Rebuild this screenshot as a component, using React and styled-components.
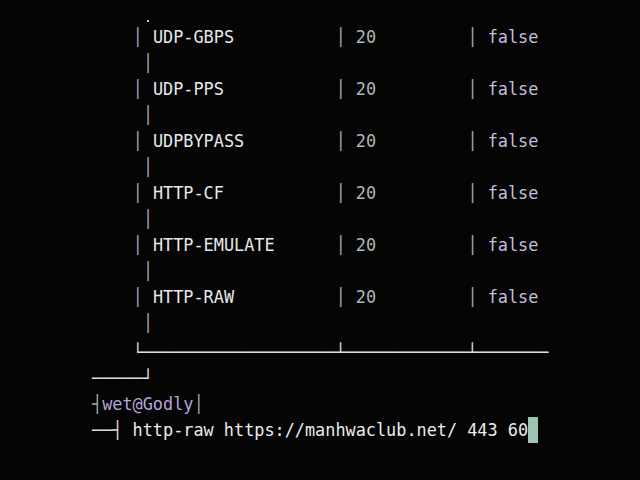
import React from "react";
import styled, { createGlobalStyle } from "styled-components";

const Global = createGlobalStyle`
  html, body { margin: 0; padding: 0; background: #050505; }
  #root { width: 640px; height: 480px; }
`;

const Screen = styled.div`
  width: 640px;
  height: 480px;
  overflow: hidden;
  background: #050505;
  padding: 0 0 0 92px;
  box-sizing: border-box;
`;

const Terminal = styled.div`
  font-family: "DejaVu Sans Mono", "Liberation Mono", monospace;
  font-size: 16.85px;
  color: #e6e6e6;
`;

const Line = styled.div`
  height: 26px;
  line-height: 26px;
  white-space: pre;
  margin-top: ${(p) => p.$gap || 0}px;
`;

const DotLine = styled.div`
  height: 24px;
  display: flex;
  align-items: flex-end;
  padding: 0 0 2px 55px;
  box-sizing: border-box;
`;

const Dot = styled.span`
  width: 2px;
  height: 2px;
  background: #bdbdc4;
`;

const tones = {
  border: "#a9a9b2",
  name: "#e8e8e8",
  num: "#b4b4b4",
  bool: "#c4bfdc",
  user: "#b7a4d6",
  cmd: "#ececec",
  rule: "#dcdce2",
};

const T = styled.span`
  color: ${(p) => tones[p.$tone] || "#e6e6e6"};
`;

const Cursor = styled.span`
  display: inline-block;
  width: 10px;
  height: 26px;
  vertical-align: top;
  background: #9ec4b4;
`;

const methods = ["UDP-GBPS", "UDP-PPS", "UDPBYPASS", "HTTP-CF", "HTTP-EMULATE", "HTTP-RAW"];

export default function App() {
  return (
    <>
      <Global />
      <Screen>
        <Terminal>
          <DotLine>
            <Dot />
          </DotLine>
          {methods.map((m) => (
            <React.Fragment key={m}>
              <Line>
                {"    "}
                <T $tone="border">│</T>
                {" "}
                <T $tone="name">{m.padEnd(18)}</T>
                <T $tone="border">│</T>
                {" "}
                <T $tone="num">{"20".padEnd(11)}</T>
                <T $tone="border">│</T>
                {" "}
                <T $tone="bool">false</T>
              </Line>
              <Line>
                {"     "}
                <T $tone="border">│</T>
              </Line>
            </React.Fragment>
          ))}
          <Line $gap={3}>
            {"    "}
            <T $tone="rule">{"└" + "─".repeat(19) + "┴" + "─".repeat(12) + "┴" + "─".repeat(7)}</T>
          </Line>
          <Line>
            <T $tone="rule">{"─────┘"}</T>
          </Line>
          <Line>
            <T $tone="border">┤</T>
            <T $tone="user">wet@Godly</T>
            <T $tone="border">│</T>
          </Line>
          <Line>
            <T $tone="rule">{"──┤"}</T>
            <T $tone="cmd">{" http-raw https://manhwaclub.net/ 443 60"}</T>
            <Cursor />
          </Line>
        </Terminal>
      </Screen>
    </>
  );
}
